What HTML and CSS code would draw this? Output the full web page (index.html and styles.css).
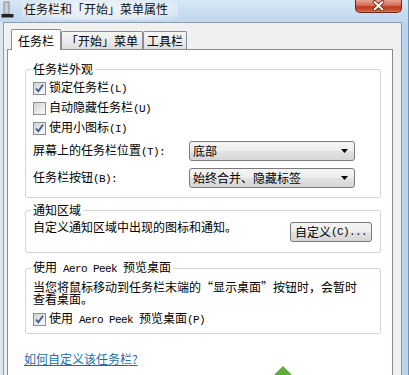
FILE: index.html
```html
<!DOCTYPE html>
<html lang="zh-CN">
<head>
<meta charset="utf-8">
<title>任务栏和「开始」菜单属性</title>
<link rel="stylesheet" href="styles.css">
</head>
<body>
<div class="window">
  <div class="titlebar">
    <svg class="app-icon" width="13" height="19" viewBox="0 0 13 19">
      <rect x="3" y="2" width="5" height="12" fill="#c9ccd0" stroke="#8a8e94" stroke-width="1"/>
      <rect x="0.5" y="14" width="12" height="3.5" fill="#222"/>
    </svg>
    <span class="title">任务栏和「开始」菜单属性</span>
    <div class="close">
      <svg width="45" height="11" viewBox="0 0 45 11">
        <path d="M18.5 2 L26.5 9.5 M26.5 2 L18.5 9.5" stroke="#5b1b10" stroke-width="3.6" stroke-linecap="round"/>
        <path d="M18.5 2 L26.5 9.5 M26.5 2 L18.5 9.5" stroke="#ffffff" stroke-width="2" stroke-linecap="round"/>
      </svg>
    </div>
  </div>
  <div class="client">
    <div class="tabs">
      <div class="tab active tab-w1">任务栏</div>
      <div class="tab tab-w2">「开始」菜单</div>
      <div class="tab tab-w3">工具栏</div>
    </div>
    <div class="panel">
      <fieldset class="group g1">
        <legend>任务栏外观</legend>
        <div class="check-row first">
          <span class="cb"><svg width="11" height="11" viewBox="0 0 11 11"><path d="M2 5.5 L4.3 8.3 L9 1.8" fill="none" stroke="#425c93" stroke-width="1.9"/></svg></span>
          <span>锁定任务栏<span class="en">(L)</span></span>
        </div>
        <div class="check-row">
          <span class="cb"></span>
          <span>自动隐藏任务栏<span class="en">(U)</span></span>
        </div>
        <div class="check-row">
          <span class="cb"><svg width="11" height="11" viewBox="0 0 11 11"><path d="M2 5.5 L4.3 8.3 L9 1.8" fill="none" stroke="#425c93" stroke-width="1.9"/></svg></span>
          <span>使用小图标<span class="en">(I)</span></span>
        </div>
        <div class="field-row fr1">
          <span class="field-label">屏幕上的任务栏位置<span class="en">(T):</span></span>
          <div class="combo"><span>底部</span><svg width="7" height="4" viewBox="0 0 7 4"><polygon points="0,0 7,0 3.5,4" fill="#000"/></svg></div>
        </div>
        <div class="field-row fr2">
          <span class="field-label">任务栏按钮<span class="en">(B):</span></span>
          <div class="combo"><span>始终合并、隐藏标签</span><svg width="7" height="4" viewBox="0 0 7 4"><polygon points="0,0 7,0 3.5,4" fill="#000"/></svg></div>
        </div>
      </fieldset>

      <fieldset class="group g2">
        <legend>通知区域</legend>
        <div class="notify-row">
          <span class="notify-text">自定义通知区域中出现的图标和通知。</span>
          <div class="btn">自定义<span class="en">(C)...</span></div>
        </div>
      </fieldset>

      <fieldset class="group g3">
        <legend>使用<span class="en"> Aero Peek </span>预览桌面</legend>
        <div class="peek-text">
          <div class="peek-line">当您将鼠标移动到任务栏末端的“显示桌面”按钮时，会暂时</div>
          <div class="peek-line">查看桌面。</div>
        </div>
        <div class="check-row peek-check">
          <span class="cb"><svg width="11" height="11" viewBox="0 0 11 11"><path d="M2 5.5 L4.3 8.3 L9 1.8" fill="none" stroke="#425c93" stroke-width="1.9"/></svg></span>
          <span>使用<span class="en"> Aero Peek </span>预览桌面<span class="en">(P)</span></span>
        </div>
      </fieldset>

      <a class="help-link" href="#">如何自定义该任务栏?</a>
    </div>
  </div>
  <svg class="watermark" width="22" height="10" viewBox="0 0 22 10">
    <polygon points="11,0 21,10 1,10" fill="#5fae37"/>
  </svg>
</div>
</body>
</html>
```

FILE: styles.css
```css
html, body {
  margin: 0;
  padding: 0;
}

body {
  font-family: "Noto Sans CJK SC", "Noto Sans", sans-serif;
  font-size: 12px;
  line-height: 12px;
  color: #000;
  background: #c6dbf0;
}

.window {
  position: relative;
  width: 409px;
  height: 375px;
  overflow: hidden;
  box-sizing: border-box;
  border-right: 1px solid #6f91b6;
  background: linear-gradient(to right, #dde6ef 0, #dde6ef 3px, #c3d9ef 3px, #bcd4ec 100%);
  display: flex;
  flex-direction: column;
}

/* ---------- title bar ---------- */
.titlebar {
  flex: none;
  height: 22px;
  display: flex;
  align-items: flex-start;
  background: linear-gradient(to bottom, #d8e7f6 0%, #c8dcf0 60%, #c0d7ee 100%);
}

.app-icon {
  flex: none;
  margin: 0 0 0 1px;
}

.title {
  margin-left: 8px;
  padding: 2px 10px 4px 2px;
  line-height: 14px;
  font-size: 12px;
  color: #111;
  background: radial-gradient(ellipse at center, rgba(240, 244, 248, 0.95) 0%, rgba(236, 241, 247, 0.85) 55%, rgba(230, 238, 246, 0) 100%);
}

.close {
  margin-left: auto;
  margin-right: 6px;
  width: 47px;
  height: 13px;
  box-sizing: border-box;
  border: 1px solid #6a2a1f;
  border-top: none;
  border-radius: 0 0 5px 5px;
  background: linear-gradient(to bottom, #e7a596 0%, #d86a54 45%, #c3401f 55%, #c9482a 80%, #e07a52 100%);
  display: flex;
  align-items: flex-start;
  justify-content: center;
}

/* ---------- client area ---------- */
.client {
  flex: 1;
  min-height: 0;
  margin: 0 6px 0 3px;
  border: 1px solid #8c9db0;
  border-bottom: none;
  background: #f0f0f0;
  padding: 6px 8px 0 3px;
  display: flex;
  flex-direction: column;
}

.tabs {
  display: flex;
  align-items: flex-end;
  padding-left: 4px;
  flex: none;
}

.tab {
  box-sizing: border-box;
  border: 1px solid #898c95;
  border-bottom: none;
  border-radius: 2px 2px 0 0;
  text-align: center;
  line-height: 12px;
  height: 18px;
  padding-top: 3px;
  background: linear-gradient(to bottom, #f6f6f6 0%, #ebebeb 50%, #dedede 100%);
  white-space: nowrap;
}

.tab.active {
  position: relative;
  z-index: 1;
  height: 21px;
  padding-top: 5px;
  margin-bottom: -1px;
  background: #fff;
}

.tab-w1 { width: 50px; }
.tab-w2 { width: 82px; }
.tab-w3 { width: 44px; }

.panel {
  flex: none;
  border: 1px solid #898c95;
  background: #fff;
  padding: 13px 11px 40px 17px;
}

/* ---------- group boxes ---------- */
.group {
  margin: 0;
  min-inline-size: 0;
  border: 1px solid #d5d5d5;
  border-radius: 3px;
  padding: 0 9px 9px 7px;
}

.group legend {
  padding: 0 2px;
  margin-left: -2px;
  line-height: 12px;
  font-size: 12px;
}

.g2 {
  margin-top: 6px;
  padding-right: 8px;
  padding-bottom: 10px;
}

.g3 {
  margin-top: 8px;
  padding-bottom: 4px;
}

.en {
  font-family: "Liberation Mono", "DejaVu Sans Mono", monospace;
  font-size: 11px;
  letter-spacing: -0.6px;
  white-space: pre;
}

.check-row {
  display: flex;
  align-items: center;
  height: 20px;
  gap: 3px;
}

.check-row.first { margin-top: 3px; }
.check-row.peek-check { margin-top: 4px; }

.cb {
  flex: none;
  width: 13px;
  height: 13px;
  box-sizing: border-box;
  border: 1px solid #8e8f8f;
  background: linear-gradient(135deg, #d2d4d6 0%, #e6e7e8 50%, #f9f9f9 100%);
  display: flex;
  align-items: center;
  justify-content: center;
}

.field-row {
  display: flex;
  align-items: center;
  height: 20px;
}

.fr1 { margin-top: 3px; }
.fr2 { margin-top: 7px; }

.field-label {
  width: 156px;
  flex: none;
  white-space: nowrap;
}

.combo {
  width: 166px;
  height: 20px;
  box-sizing: border-box;
  border: 1px solid #7a7a7a;
  border-radius: 3px;
  background: linear-gradient(to bottom, #f4f4f4 0%, #eeeeee 48%, #e2e2e2 52%, #d6d6d6 100%);
  display: flex;
  align-items: center;
  justify-content: space-between;
  padding: 0 6px 0 3px;
  white-space: nowrap;
}

.notify-row {
  display: flex;
  align-items: flex-start;
  margin-top: 5px;
}

.notify-text {
  line-height: 12px;
  white-space: nowrap;
}

.btn {
  margin-left: auto;
  margin-top: 1px;
  width: 82px;
  height: 20px;
  box-sizing: border-box;
  border: 1px solid #7a7a7a;
  border-radius: 3px;
  background: linear-gradient(to bottom, #f4f4f4 0%, #eeeeee 48%, #e2e2e2 52%, #d6d6d6 100%);
  display: flex;
  align-items: center;
  justify-content: center;
  white-space: nowrap;
}

.peek-text {
  margin-top: 6px;
}

.peek-line {
  height: 12px;
  line-height: 12px;
  font-size: 12px;
  white-space: nowrap;
}

.help-link {
  display: inline-block;
  margin-top: 19px;
  margin-left: -1px;
  color: #1b6fae;
  text-decoration: underline;
  line-height: 12px;
}

.watermark {
  position: absolute;
  left: 272px;
  top: 366px;
}
```
